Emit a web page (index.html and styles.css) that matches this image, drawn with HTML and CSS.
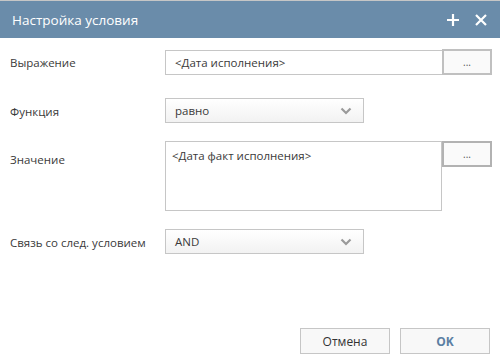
FILE: index.html
```html
<!DOCTYPE html>
<html lang="ru">
<head>
    <meta charset="UTF-8">
    <title>Настройка условия</title>
    <link rel="stylesheet" href="styles.css">
</head>
<body>
    <div class="dialog">
        <div class="titlebar">
            <div class="title">Настройка условия</div>
            <div class="tools">
                <svg class="tool" width="14" height="14" viewBox="0 0 14 14"><path d="M7 1v12M1 7h12" stroke="#fff" stroke-width="2.2"/></svg>
                <svg class="tool" width="14" height="14" viewBox="0 0 14 14"><path d="M2 2l10 10M12 2L2 12" stroke="#fff" stroke-width="2.2"/></svg>
            </div>
        </div>

        <div class="form">
            <div class="row row-expr">
                <div class="label">Выражение</div>
                <div class="field">
                    <div class="input">&lt;Дата исполнения&gt;</div>
                    <button class="dots">...</button>
                </div>
            </div>

            <div class="row row-func">
                <div class="label">Функция</div>
                <div class="field">
                    <div class="select">
                        <span>равно</span>
                        <svg width="12" height="8" viewBox="0 0 12 8"><path d="M1.5 1.5l4.5 4.5 4.5-4.5" fill="none" stroke="#9a9a9a" stroke-width="2.2"/></svg>
                    </div>
                </div>
            </div>

            <div class="row row-value">
                <div class="label">Значение</div>
                <div class="field">
                    <div class="textarea">&lt;Дата факт исполнения&gt;</div>
                    <button class="dots dots-focus">...</button>
                </div>
            </div>

            <div class="row row-link">
                <div class="label">Связь со след. условием</div>
                <div class="field">
                    <div class="select">
                        <span>AND</span>
                        <svg width="12" height="8" viewBox="0 0 12 8"><path d="M1.5 1.5l4.5 4.5 4.5-4.5" fill="none" stroke="#9a9a9a" stroke-width="2.2"/></svg>
                    </div>
                </div>
            </div>
        </div>

        <div class="footer">
            <button class="btn">Отмена</button>
            <button class="btn btn-ok">OK</button>
        </div>
    </div>
</body>
</html>
```

FILE: styles.css
```css
* {
    margin: 0;
    padding: 0;
    box-sizing: border-box;
}

body {
    background: #fff;
    font-family: 'Open Sans', 'Noto Sans', sans-serif;
    font-size: 11.5px;
    color: #3a3a3a;
}

.dialog {
    width: 500px;
    height: 360px;
    display: flex;
    flex-direction: column;
}

.titlebar {
    height: 38px;
    background: #6a8caa;
    border-top: 1px solid #c6c6c6;
    display: flex;
    align-items: center;
    justify-content: space-between;
    padding: 0 12px 0 12px;
}

.title {
    color: #fff;
    font-size: 13.5px;
}

.tools {
    display: flex;
    gap: 14px;
}

.tool {
    display: block;
}

.form {
    padding: 10px 9px 0 10px;
    display: flex;
    flex-direction: column;
}

.row {
    display: flex;
}

.label {
    width: 155px;
    flex-shrink: 0;
    display: flex;
    align-items: center;
    padding-top: 2px;
}

.field {
    display: flex;
    align-items: flex-start;
}

.row-expr .field {
    align-items: center;
}

.row-func {
    margin-top: 23px;
}

.row-value {
    margin-top: 18px;
}

.row-value .label {
    align-items: flex-start;
    padding-top: 11px;
}

.row-link {
    margin-top: 18px;
}

.input {
    width: 277px;
    height: 25px;
    border: 1px solid #c6c6c6;
    border-right: none;
    padding: 0 9px;
    display: flex;
    align-items: center;
    margin-top: 2px;
}

.textarea {
    width: 277px;
    height: 70px;
    border: 1px solid #c6c6c6;
    padding: 6px 6px;
}

.dots {
    width: 50px;
    height: 26px;
    background: #fafafa;
    border: 2px solid #c0c0c0;
    font-family: inherit;
    font-size: 10px;
    color: #555;
    line-height: 1;
}

.dots-focus {
    border-color: #b2b2b2;
}

.select {
    width: 199px;
    height: 25px;
    border: 1px solid #c6c6c6;
    background: linear-gradient(#ffffff, #f2f2f2);
    display: flex;
    align-items: center;
    justify-content: space-between;
    padding: 0 11px 0 9px;
}

.footer {
    margin-top: auto;
    display: flex;
    justify-content: flex-end;
    gap: 10px;
    padding: 0 10px 6px 0;
}

.btn {
    width: 90px;
    height: 26px;
    background: #f8f8f8;
    border: 1px solid #c6c6c6;
    font-family: inherit;
    font-size: 12px;
    color: #333;
}

.btn-ok {
    color: #5b7fa3;
    font-weight: bold;
}
```
